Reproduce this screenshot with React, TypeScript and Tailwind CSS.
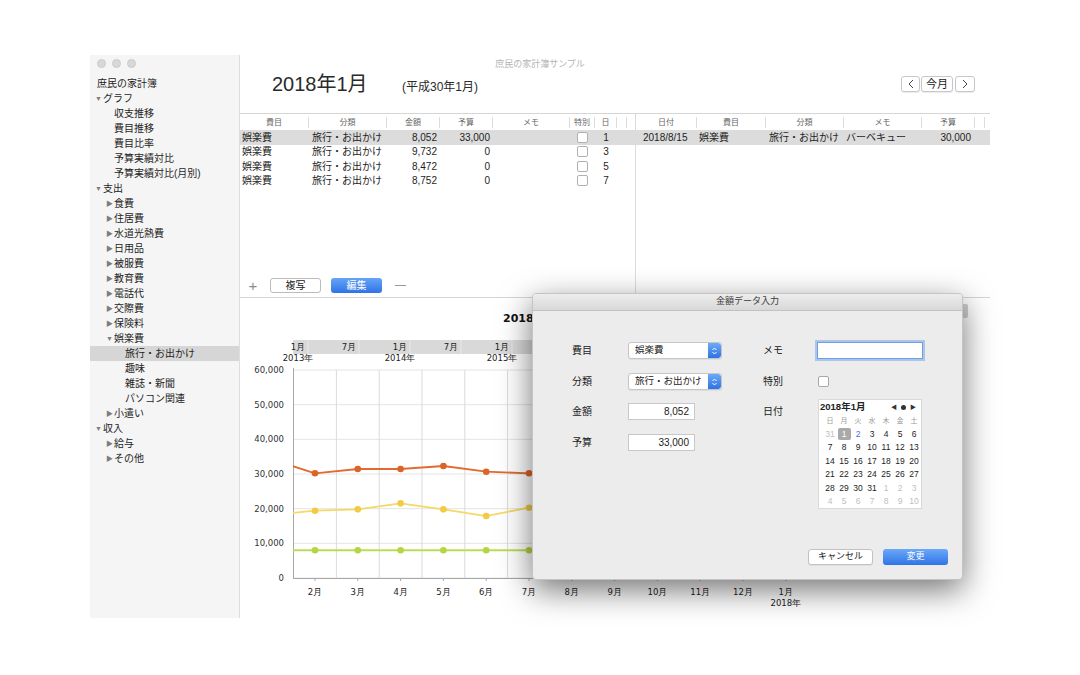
import React from "react";

type Kind = "t" | "d0" | "c1" | "r1" | "d1" | "c2";
const side: [string, Kind, boolean?][] = [
  ["庶民の家計簿", "t"],
  ["グラフ", "d0"],
  ["収支推移", "c1"],
  ["費目推移", "c1"],
  ["費目比率", "c1"],
  ["予算実績対比", "c1"],
  ["予算実績対比(月別)", "c1"],
  ["支出", "d0"],
  ["食費", "r1"],
  ["住居費", "r1"],
  ["水道光熱費", "r1"],
  ["日用品", "r1"],
  ["被服費", "r1"],
  ["教育費", "r1"],
  ["電話代", "r1"],
  ["交際費", "r1"],
  ["保険料", "r1"],
  ["娯楽費", "d1"],
  ["旅行・お出かけ", "c2", true],
  ["趣味", "c2"],
  ["雑誌・新聞", "c2"],
  ["パソコン関連", "c2"],
  ["小遣い", "r1"],
  ["収入", "d0"],
  ["給与", "r1"],
  ["その他", "r1"],
];

function SideRow({ t, k, sel }: { t: string; k: Kind; sel?: boolean }) {
  const pad =
    k === "t" ? "pl-[7px]" : k === "d0" ? "pl-[5px]" : k === "c1" ? "pl-[24px]" : k === "c2" ? "pl-[35px]" : "pl-[16px]";
  const tri = k === "d0" || k === "d1" ? "▼" : k === "r1" ? "▶" : null;
  return (
    <div className={`h-[15px] flex items-center text-[10px] leading-[15px] text-[#1e1e1e] ${pad} ${sel ? "bg-[#d6d6d6]" : ""}`}>
      {tri && <span className="w-[8px] text-[7px] text-[#7d7d7d] leading-none">{tri}</span>}
      <span>{t}</span>
    </div>
  );
}

const leftCols = [
  { n: "費目", w: "w-[69px]" },
  { n: "分類", w: "w-[78px]" },
  { n: "金額", w: "w-[53px]" },
  { n: "予算", w: "w-[53px]" },
  { n: "メモ", w: "w-[77px]" },
  { n: "特別", w: "w-[25px]" },
  { n: "日", w: "w-[22px]" },
  { n: "", w: "w-[10px]" },
];
const rightCols = [
  { n: "日付", w: "w-[61px]" },
  { n: "費目", w: "w-[69px]" },
  { n: "分類", w: "w-[78px]" },
  { n: "メモ", w: "w-[78px]" },
  { n: "予算", w: "w-[53px]" },
  { n: "", w: "w-[10px]" },
];

const leftRows = [
  ["娯楽費", "旅行・お出かけ", "8,052", "33,000", "1"],
  ["娯楽費", "旅行・お出かけ", "9,732", "0", "3"],
  ["娯楽費", "旅行・お出かけ", "8,472", "0", "5"],
  ["娯楽費", "旅行・お出かけ", "8,752", "0", "7"],
];

function HeaderRow({ cols }: { cols: { n: string; w: string }[] }) {
  return (
    <div className="h-[16px] flex items-center shrink-0">
      {cols.map((c, i) => (
        <div key={i} className={`${c.w} h-[11px] leading-[11px] border-r border-[#dcdcdc] text-center text-[8px] text-[#666]`}>
          {c.n}
        </div>
      ))}
    </div>
  );
}

const Y0 = 280;
const XR = 575;
const yv = (v: number) => Y0 - (v * 208) / 60000;
const xk = (k: number) => 75 + 42.8 * k;
const orange = [34200, 30200, 31440, 31440, 32300, 30660, 30200, 31000, 30500, 31200, 30800, 31500, 30000];
const yellow = [18200, 19420, 19800, 21540, 19800, 17880, 20280, 19500, 19000, 20000, 19600, 20500, 19000];
const green = orange.map(() => 8000);
const monthLabels = ["2月", "3月", "4月", "5月", "6月", "7月", "8月", "9月", "10月", "11月", "12月", "1月"];

function Series({ data, stroke, fill }: { data: number[]; stroke: string; fill: string }) {
  const pts = data.map((v, i) => `${xk(i - 1)},${yv(v)}`).join(" ");
  return (
    <g clipPath="url(#plotclip)">
      <polyline points={pts} fill="none" stroke={stroke} strokeWidth={1.8} />
      {data.map((v, i) => (i === 0 ? null : <circle key={i} cx={xk(i - 1)} cy={yv(v)} r={3.3} fill={fill} />))}
    </g>
  );
}

function Chart() {
  const chartFont = "DejaVu Sans, Verdana, sans-serif";
  return (
    <svg width={750} height={320} className="block">
      <defs>
        <clipPath id="plotclip">
          <rect x={53} y={60} width={XR - 53} height={222} />
        </clipPath>
      </defs>
      <text x={263} y={24} fontFamily={chartFont} fontSize={11} fontWeight="bold" fill="#111">
        2018年
      </text>
      <rect x={53} y={42} width={XR - 53} height={14} fill="#d9d9d9" />
      {Array.from({ length: 6 }).map((_, j) => {
        const x = 58 + 51 * j;
        return (
          <g key={j}>
            <line x1={x + 10} y1={42} x2={x + 10} y2={56} stroke="#e8e8e8" strokeWidth={1} />
            <text x={x} y={52} textAnchor="middle" fontFamily={chartFont} fontSize={8.5} fill="#222">
              {j % 2 === 0 ? "1月" : "7月"}
            </text>
            {j % 2 === 0 && (
              <text x={x} y={63} textAnchor="middle" fontFamily={chartFont} fontSize={8.5} fill="#222">
                {2013 + j / 2}年
              </text>
            )}
          </g>
        );
      })}
      {[0, 10000, 20000, 30000, 40000, 50000, 60000].map((v) => (
        <g key={v}>
          <line x1={53} y1={yv(v)} x2={XR} y2={yv(v)} stroke="#e4e4e4" strokeWidth={1} />
          <text x={44} y={yv(v) + 3} textAnchor="end" fontFamily={chartFont} fontSize={8.5} fill="#333">
            {v === 0 ? "0" : v.toLocaleString("en-US")}
          </text>
        </g>
      ))}
      {Array.from({ length: 11 }).map((_, k) => (
        <line key={k} x1={96.4 + 42.8 * k} y1={72} x2={96.4 + 42.8 * k} y2={Y0} stroke="#dadada" strokeWidth={1} />
      ))}
      <line x1={53.5} y1={70} x2={53.5} y2={Y0} stroke="#a8a8a8" strokeWidth={1} />
      <line x1={53} y1={Y0 + 0.5} x2={XR} y2={Y0 + 0.5} stroke="#a8a8a8" strokeWidth={1} />
      {monthLabels.map((m, k) => (
        <g key={k}>
          <line x1={xk(k)} y1={Y0} x2={xk(k)} y2={Y0 + 3} stroke="#a8a8a8" />
          <text x={xk(k)} y={297} textAnchor="middle" fontFamily={chartFont} fontSize={8.5} fill="#222">
            {m}
          </text>
        </g>
      ))}
      <text x={xk(11)} y={308} textAnchor="middle" fontFamily={chartFont} fontSize={8.5} fill="#222">
        2018年
      </text>
      <Series data={green} stroke="#bcdc52" fill="#b4d544" />
      <Series data={yellow} stroke="#f6d864" fill="#f2cb45" />
      <Series data={orange} stroke="#e06a30" fill="#dd6426" />
    </svg>
  );
}

function Stepper() {
  return (
    <span className="w-[13px] h-full bg-linear-to-b from-[#6caaf8] to-[#2e72e4] rounded-r-[3px] flex items-center justify-center">
      <svg width="7" height="10" viewBox="0 0 7 10">
        <path d="M1.5 4 L3.5 2 L5.5 4" fill="none" stroke="white" strokeWidth="1" />
        <path d="M1.5 6 L3.5 8 L5.5 6" fill="none" stroke="white" strokeWidth="1" />
      </svg>
    </span>
  );
}

function Popup({ v }: { v: string }) {
  return (
    <div className="w-[94px] h-[17px] bg-white border border-[#c6c6c6] rounded-[3px] flex items-center shadow-[0_1px_1px_rgba(0,0,0,0.06)] overflow-hidden">
      <span className="flex-1 pl-[6px] text-[9.5px] text-[#222]">{v}</span>
      <Stepper />
    </div>
  );
}

const weeks = [
  [31, 1, 2, 3, 4, 5, 6],
  [7, 8, 9, 10, 11, 12, 13],
  [14, 15, 16, 17, 18, 19, 20],
  [21, 22, 23, 24, 25, 26, 27],
  [28, 29, 30, 31, 1, 2, 3],
  [4, 5, 6, 7, 8, 9, 10],
];

function Calendar() {
  return (
    <div className="w-[104px] h-[110px] bg-white border border-[#dadada] mt-[-4px] flex flex-col">
      <div className="h-[15px] flex items-center pl-[1px] pr-[5px]">
        <span className="text-[9.5px] font-bold text-[#222]">2018年1月</span>
        <span className="ml-auto flex items-center gap-[4px] text-[#333]">
          <span className="text-[6px]">◀</span>
          <span className="w-[5px] h-[5px] rounded-full bg-[#333]"></span>
          <span className="text-[6px]">▶</span>
        </span>
      </div>
      <div className="h-[13px] grid grid-cols-7 pl-[4px] text-[7px] text-[#9a9a9a] items-center">
        {["日", "月", "火", "水", "木", "金", "土"].map((d) => (
          <span key={d} className="text-center">{d}</span>
        ))}
      </div>
      {weeks.map((w, wi) => (
        <div key={wi} className="h-[13.5px] grid grid-cols-7 pl-[4px] text-[8.5px] items-center">
          {w.map((d, di) => {
            const other = (wi === 0 && di === 0) || (wi >= 4 && d < 20 && (wi === 5 || di >= 4));
            const sel = wi === 0 && d === 1;
            const today = wi === 0 && d === 2;
            return (
              <span key={di} className="flex justify-center">
                <span
                  className={`w-[13px] h-[12px] flex items-center justify-center rounded-[2px] ${
                    sel ? "bg-[#a9a9a9] text-white" : other ? "text-[#c0c0c0]" : today ? "text-[#3b78d8]" : "text-[#222]"
                  }`}
                >
                  {d}
                </span>
              </span>
            );
          })}
        </div>
      ))}
    </div>
  );
}

function Dialog() {
  return (
    <div className="absolute left-[532px] top-[293px] w-[431px] h-[287px] bg-[#ececec] rounded-[4px] border border-[#c4c4c4] shadow-[0_10px_32px_rgba(0,0,0,0.55)] flex flex-col overflow-hidden">
      <div className="h-[17px] shrink-0 bg-linear-to-b from-[#ededed] to-[#d8d8d8] border-b border-[#c2c2c2] flex items-center justify-center text-[9px] text-[#3a3a3a]">
        金額データ入力
      </div>
      <div className="flex-1 flex pt-[31px] pl-[39px] text-[10px] text-[#222]">
        <div className="w-[191px] flex flex-col">
          <div className="h-[17px] flex items-center">
            <span className="w-[56px]">費目</span>
            <Popup v="娯楽費" />
          </div>
          <div className="h-[17px] mt-[14px] flex items-center">
            <span className="w-[56px]">分類</span>
            <Popup v="旅行・お出かけ" />
          </div>
          <div className="h-[17px] mt-[13px] flex items-center">
            <span className="w-[56px]">金額</span>
            <div className="w-[67px] h-[17px] bg-white border border-[#c8c8c8] text-right pr-[5px] leading-[15px] text-[10px]">8,052</div>
          </div>
          <div className="h-[17px] mt-[14px] flex items-center">
            <span className="w-[56px]">予算</span>
            <div className="w-[67px] h-[17px] bg-white border border-[#c8c8c8] text-right pr-[5px] leading-[15px] text-[10px]">33,000</div>
          </div>
        </div>
        <div className="flex flex-col">
          <div className="h-[17px] flex items-center">
            <span className="w-[54px]">メモ</span>
            <div className="w-[106px] h-[17px] bg-white border border-[#6e9fe2] shadow-[0_0_0_2px_rgba(120,165,235,0.55)]"></div>
          </div>
          <div className="h-[17px] mt-[14px] flex items-center">
            <span className="w-[55px]">特別</span>
            <span className="w-[11px] h-[11px] bg-white border border-[#a8a8a8] rounded-[2px]"></span>
          </div>
          <div className="mt-[13px] flex items-start">
            <span className="w-[55px] h-[17px] leading-[17px]">日付</span>
            <Calendar />
          </div>
        </div>
      </div>
      <div className="flex justify-end gap-[10px] pr-[14px] pb-[14px]">
        <div className="w-[65px] h-[16px] bg-white border border-[#c2c2c2] rounded-[3px] flex items-center justify-center text-[9px] text-[#222] shadow-[0_1px_1px_rgba(0,0,0,0.06)]">
          キャンセル
        </div>
        <div className="w-[65px] h-[16px] bg-linear-to-b from-[#6aa8f8] to-[#2f74e6] rounded-[3px] flex items-center justify-center text-[9px] text-white">
          変更
        </div>
      </div>
    </div>
  );
}

export default function App() {
  return (
    <div className="relative w-[1080px] h-[675px] bg-white overflow-hidden pt-[55px] pl-[90px] font-['Liberation_Sans','Noto_Sans_CJK_JP',sans-serif]">
      <div className="relative w-[900px] h-[563px] flex">
        <div className="absolute left-0 right-0 top-[3px] text-center text-[9px] text-[#b4b4b4]">庶民の家計簿サンプル</div>
        <div className="w-[150px] h-full bg-[#f5f5f5] border-r border-[#dedede] pt-[4px] shrink-0">
          <div className="flex gap-[6px] pl-[6.5px] h-[9px]">
            <span className="w-[9px] h-[9px] rounded-full bg-[#d8d8d8] border border-[#cbcbcb]"></span>
            <span className="w-[9px] h-[9px] rounded-full bg-[#d8d8d8] border border-[#cbcbcb]"></span>
            <span className="w-[9px] h-[9px] rounded-full bg-[#d8d8d8] border border-[#cbcbcb]"></span>
          </div>
          <div className="mt-[8px]">
            {side.map(([t, k, s], i) => (
              <SideRow key={i} t={t} k={k} sel={s} />
            ))}
          </div>
        </div>
        <div className="flex-1 flex flex-col">
          <div className="h-[58px] flex items-start shrink-0">
            <div className="pl-[32px] pt-[17px] flex items-baseline">
              <span className="w-[130px] text-[20px] leading-[24px] text-[#2a2a2a]">2018年1月</span>
              <span className="text-[12px] text-[#2a2a2a]">(平成30年1月)</span>
            </div>
            <div className="ml-auto mr-[15px] mt-[21px] flex gap-[1px]">
              <div className="w-[19px] h-[16px] bg-white border border-[#c8c8c8] rounded-[3px] flex items-center justify-center shadow-[0_1px_1px_rgba(0,0,0,0.08)]">
                <svg width="6" height="10" viewBox="0 0 6 10"><path d="M5 1 L1 5 L5 9" fill="none" stroke="#444" strokeWidth="1" /></svg>
              </div>
              <div className="w-[32px] h-[16px] bg-white border border-[#c8c8c8] rounded-[3px] flex items-center justify-center text-[11px] text-[#222] shadow-[0_1px_1px_rgba(0,0,0,0.08)]">今月</div>
              <div className="w-[20px] h-[16px] bg-white border border-[#c8c8c8] rounded-[3px] flex items-center justify-center ml-[1px] shadow-[0_1px_1px_rgba(0,0,0,0.08)]">
                <svg width="6" height="10" viewBox="0 0 6 10"><path d="M1 1 L5 5 L1 9" fill="none" stroke="#444" strokeWidth="1" /></svg>
              </div>
            </div>
          </div>
          <div className="h-[185px] border-t border-b border-[#d6d6d6] flex shrink-0">
            <div className="w-[396px] border-r border-[#dcdcdc] flex flex-col">
              <HeaderRow cols={leftCols} />
              {leftRows.map((r, i) => (
                <div key={i} className={`h-[14.5px] flex items-center text-[10px] text-[#1e1e1e] ${i === 0 ? "bg-[#dcdcdc]" : ""}`}>
                  <span className="w-[69px] pl-[2px]">{r[0]}</span>
                  <span className="w-[78px] pl-[3px]">{r[1]}</span>
                  <span className="w-[53px] text-right pr-[3px]">{r[2]}</span>
                  <span className="w-[53px] text-right pr-[3px]">{r[3]}</span>
                  <span className="w-[77px]"></span>
                  <span className="w-[25px] flex justify-center">
                    <span className="w-[11px] h-[11px] bg-white border border-[#b0b0b0] rounded-[2px]"></span>
                  </span>
                  <span className="w-[22px] text-center">{r[4]}</span>
                </div>
              ))}
              <div className="flex-1"></div>
              <div className="h-[15px] mb-[4px] flex items-center pl-[7px]">
                <span className="w-[12px] text-center text-[15px] font-light text-[#8a8a8a] leading-none">+</span>
                <div className="ml-[11px] w-[51px] h-[15px] bg-white border border-[#bcbcbc] rounded-[3px] flex items-center justify-center text-[10px] text-[#222]">複写</div>
                <div className="ml-[10px] w-[51px] h-[15px] bg-linear-to-b from-[#66a4f7] to-[#2f73e6] rounded-[3px] flex items-center justify-center text-[10px] text-white">編集</div>
                <span className="ml-[13px] w-[11px] h-[1px] bg-[#9a9a9a]"></span>
              </div>
            </div>
            <div className="flex-1 flex flex-col">
              <HeaderRow cols={rightCols} />
              <div className="h-[14.5px] flex items-center text-[10px] text-[#1e1e1e] bg-[#dcdcdc]">
                <span className="w-[61px] pl-[7px]">2018/8/15</span>
                <span className="w-[69px] pl-[2px]">娯楽費</span>
                <span className="w-[78px] pl-[3px]">旅行・お出かけ</span>
                <span className="w-[78px] pl-[2px]">バーベキュー</span>
                <span className="w-[53px] text-right pr-[4px]">30,000</span>
              </div>
            </div>
          </div>
          <div className="flex-1">
            <Chart />
          </div>
        </div>
      </div>
      <div className="absolute left-[963px] top-[304px] w-[5px] h-[14px] bg-[#d0d0d0] rounded-r-[2px]"></div>
      <Dialog />
    </div>
  );
}
